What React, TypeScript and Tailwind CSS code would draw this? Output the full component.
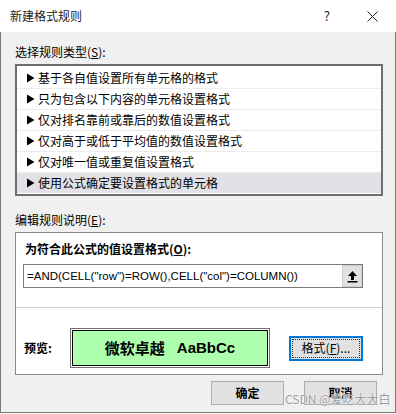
import React from "react";

const font = { fontFamily: '"Noto Sans CJK SC", "Liberation Sans", sans-serif' };

function Arrow() {
  return (
    <svg width="9" height="10" viewBox="0 0 9 10" className="shrink-0">
      <polygon points="1,0.5 8.5,5 1,9.5" fill="#000" />
    </svg>
  );
}

const rules = [
  "基于各自值设置所有单元格的格式",
  "只为包含以下内容的单元格设置格式",
  "仅对排名靠前或靠后的数值设置格式",
  "仅对高于或低于平均值的数值设置格式",
  "仅对唯一值或重复值设置格式",
  "使用公式确定要设置格式的单元格",
];

export default function App() {
  return (
    <div className="w-[396px] h-[414px] bg-white relative overflow-hidden text-black" style={font}>
      {/* Title bar */}
      <div className="h-[32px] flex items-center bg-white">
        <span className="ml-[10px] text-[12px] leading-[16px] text-[#222]">新建格式规则</span>
        <span className="ml-auto mr-[37px] text-[13px] leading-[16px] text-[#222]">?</span>
        <svg width="11" height="11" viewBox="0 0 11 11" className="mr-[18px]">
          <path d="M0.5 0.5 L10.5 10.5 M10.5 0.5 L0.5 10.5" stroke="#222" strokeWidth="1" />
        </svg>
      </div>

      {/* Body */}
      <div className="h-[381px] bg-[#f0f0f0] border-x border-b border-[#7a7a7a] pl-[14px] pr-[12px] pt-[12px] flex flex-col text-[12px]">
        <div className="leading-[16px]">
          选择规则类型(<span className="underline">S</span>):
        </div>
        <div className="mt-[4px] w-[368px] h-[132px] border-2 border-[#6e6e6e] bg-white pt-[2px] flex flex-col">
          {rules.map((r, i) => (
            <div
              key={i}
              className={
                i === rules.length - 1
                  ? "h-[20px] flex items-center pl-[9px] gap-[3px] bg-[#e1e1e7]"
                  : "h-[21px] flex items-center pl-[9px] gap-[3px] border-b border-[#ececec]"
              }
            >
              <Arrow />
              <span className="leading-[16px]">{r}</span>
            </div>
          ))}
        </div>

        <div className="mt-[16px] leading-[16px]">
          编辑规则说明(<span className="underline">E</span>):
        </div>
        <div className="mt-[4px] w-[368px] h-[143px] border border-[#8a8a8a] bg-white flex flex-col">
          <div className="mt-[8px] ml-[9px] leading-[16px] font-bold">
            为符合此公式的值设置格式(<span className="underline">O</span>):
          </div>
          <div className="mt-[7px] ml-[7px] w-[340px] h-[24px] border border-[#7a7a7a] flex items-center">
            <span
              className="ml-[3px] text-[11.5px] leading-[16px] whitespace-nowrap"
              style={{ fontFamily: '"Liberation Sans", Arial, sans-serif' }}
            >
              =AND(CELL("row")=ROW(),CELL("col")=COLUMN())
            </span>
            <div className="ml-auto w-[20px] h-[22px] bg-[#e1e1e1] border border-[#cfcfcf] flex items-center justify-center">
              <svg width="11" height="13" viewBox="0 0 11 13">
                <polygon points="5.5,1 10,6 7,6 7,10 4,10 4,6 1,6" fill="#000" />
                <rect x="0.5" y="11" width="10" height="1.5" fill="#000" />
              </svg>
            </div>
          </div>
          <div className="mt-[19px] h-px bg-[#cfcfcf]" />
          <div className="mt-[20px] flex items-center">
            <span className="ml-[8px] w-[46px] font-bold leading-[16px]">预览:</span>
            <div className="w-[200px] h-[40px] border border-[#6f6f6f] p-px bg-white">
              <div className="w-full h-full border border-black bg-[#adffad] flex items-center justify-center text-[15px] font-bold leading-[20px]">
                <span>微软卓越</span>
                <span className="ml-[12px]" style={{ fontFamily: '"Liberation Sans", Arial, sans-serif' }}>
                  AaBbCc
                </span>
              </div>
            </div>
            <div className="ml-[19px] w-[74px] h-[25px] border-2 border-[#0078d7] bg-[#e1e1e1] p-px">
              <div className="w-full h-full border border-dotted border-[#333] flex items-center justify-center leading-[16px]">
                格式(<span className="underline">F</span>)...
              </div>
            </div>
          </div>
        </div>

        <div className="mt-[6px] flex justify-end gap-[20px] pr-[6px] w-[368px]">
          <div className="w-[73px] h-[24px] bg-[#e1e1e1] border border-[#adadad] flex items-center justify-center font-bold leading-[16px]">
            确定
          </div>
          <div className="w-[73px] h-[24px] bg-[#e1e1e1] border border-[#adadad] flex items-center justify-center font-bold leading-[16px]">
            取消
          </div>
        </div>
      </div>

      {/* watermark */}
      <div
        className="absolute left-[285px] top-[391px] text-[12px] leading-[16px] text-[#9a9a9a] whitespace-nowrap"
        style={{ textShadow: "0 0 1px #fff, 0 0 1px #fff" }}
      >
        CSDN @爱吃大大白
      </div>
    </div>
  );
}
